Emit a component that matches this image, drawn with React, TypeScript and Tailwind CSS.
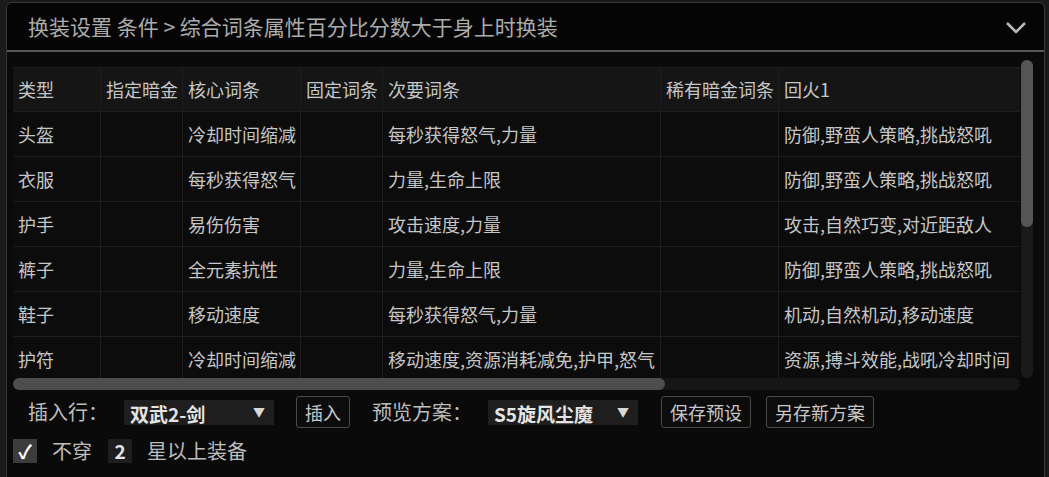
import React from "react";

const cols = [
  { w: 88, t: "类型" },
  { w: 82, t: "指定暗金" },
  { w: 118, t: "核心词条" },
  { w: 82, t: "固定词条" },
  { w: 278, t: "次要词条" },
  { w: 118, t: "稀有暗金词条" },
  { w: 241, t: "回火1" },
];

const rows: string[][] = [
  ["头盔", "", "冷却时间缩减", "", "每秒获得怒气,力量", "", "防御,野蛮人策略,挑战怒吼"],
  ["衣服", "", "每秒获得怒气", "", "力量,生命上限", "", "防御,野蛮人策略,挑战怒吼"],
  ["护手", "", "易伤伤害", "", "攻击速度,力量", "", "攻击,自然巧变,对近距敌人"],
  ["裤子", "", "全元素抗性", "", "力量,生命上限", "", "防御,野蛮人策略,挑战怒吼"],
  ["鞋子", "", "移动速度", "", "每秒获得怒气,力量", "", "机动,自然机动,移动速度"],
  ["护符", "", "冷却时间缩减", "", "移动速度,资源消耗减免,护甲,怒气", "", "资源,搏斗效能,战吼冷却时间"],
];

function Row({ cells, header }: { cells: string[]; header?: boolean }) {
  return (
    <div className={`flex h-[45px] shrink-0 border-b border-[#1e1e1e] ${header ? "bg-[#151515] border-t" : "bg-[#0c0c0c]"}`}>
      {cells.map((c, i) => (
        <div
          key={i}
          style={{ width: cols[i].w }}
          className={`shrink-0 h-full flex items-center pl-[5px] whitespace-nowrap overflow-hidden text-[18px] text-[#c6c6c6] ${i < cells.length - 1 ? "border-r border-[#1e1e1e]" : ""}`}
        >
          {c}
        </div>
      ))}
    </div>
  );
}

function Select({ text, w }: { text: string; w: number }) {
  return (
    <div style={{ width: w }} className="h-[25px] bg-[#1e1e1e] flex items-center justify-between pl-[6px] pr-[9px]">
      <span className="text-[19px] font-bold text-[#e4e4e4] leading-none mt-[3px]">{text}</span>
      <span className="text-[12px] text-[#d8d8d8] leading-none">▼</span>
    </div>
  );
}

function Btn({ text }: { text: string }) {
  return (
    <div className="h-[32px] px-[8px] border border-[#4a4a4a] rounded-[3px] bg-[#0c0c0c] flex items-center text-[18px] text-[#c8c8c8]">
      {text}
    </div>
  );
}

export default function App() {
  return (
    <div className="w-[1049px] h-[477px] bg-[#1a1a1a] overflow-hidden font-['Noto_Sans_CJK_SC','Noto_Sans',sans-serif]">
      <div className="ml-[6px] mr-[4px] mt-[2px] h-[480px] border border-[#383838] rounded-t-[6px] bg-[#0a0a0a] flex flex-col">
        <div className="h-[47px] shrink-0 bg-[#050505] rounded-t-[6px] flex items-center justify-between pl-[21px] pr-[17px]">
          <span className="text-[21px] text-[#acacac] whitespace-nowrap">换装设置 条件 &gt; 综合词条属性百分比分数大于身上时换装</span>
          <svg width="22" height="14" viewBox="0 0 22 14" className="mt-[3px]">
            <path d="M2 2 L11 11 L20 2" fill="none" stroke="#b8b8b8" strokeWidth="2.6" />
          </svg>
        </div>
        <div className="h-[2px] shrink-0 bg-[#5a5a5a]" />
        <div className="flex-1 pl-[6px] pt-[8px]">
          <div className="flex h-[330px]">
            <div className="w-[1007px] flex flex-col">
              <div className="h-[318px] pt-[7px] overflow-hidden flex flex-col">
                <Row cells={cols.map((c) => c.t)} header />
                {rows.map((r, i) => (
                  <Row key={i} cells={r} />
                ))}
              </div>
              <div className="h-[12px] bg-[#161616] rounded-full">
                <div className="h-full w-[652px] bg-[#4d4d4d] rounded-full" />
              </div>
            </div>
            <div className="w-[12px] ml-[1px] h-[318px] bg-[#1a1a1a] rounded-full">
              <div className="w-full h-[167px] bg-[#555555] rounded-full" />
            </div>
          </div>
          <div className="flex items-center h-[38px] mt-[3px] text-[20px] text-[#bdbdbd]">
            <span className="ml-[15px] w-[96px] whitespace-nowrap">插入行：</span>
            <Select text="双武2-剑" w={150} />
            <div className="ml-[22px]"><Btn text="插入" /></div>
            <span className="ml-[22px] w-[116px] whitespace-nowrap">预览方案：</span>
            <Select text="S5旋风尘魔" w={150} />
            <div className="ml-[23px]"><Btn text="保存预设" /></div>
            <div className="ml-[15px]"><Btn text="另存新方案" /></div>
          </div>
          <div className="flex items-center h-[24px] mt-[8px] text-[20px] text-[#bdbdbd]">
            <div className="w-[24px] h-[24px] bg-[#3c3c3c] flex items-center justify-center text-white text-[19px] font-bold">✓</div>
            <span className="ml-[15px]">不穿</span>
            <div className="ml-[16px] w-[24px] h-[24px] bg-[#1e1e1e] flex items-center justify-center font-bold text-[#e4e4e4] text-[19px]">2</div>
            <span className="ml-[15px]">星以上装备</span>
          </div>
        </div>
      </div>
    </div>
  );
}
